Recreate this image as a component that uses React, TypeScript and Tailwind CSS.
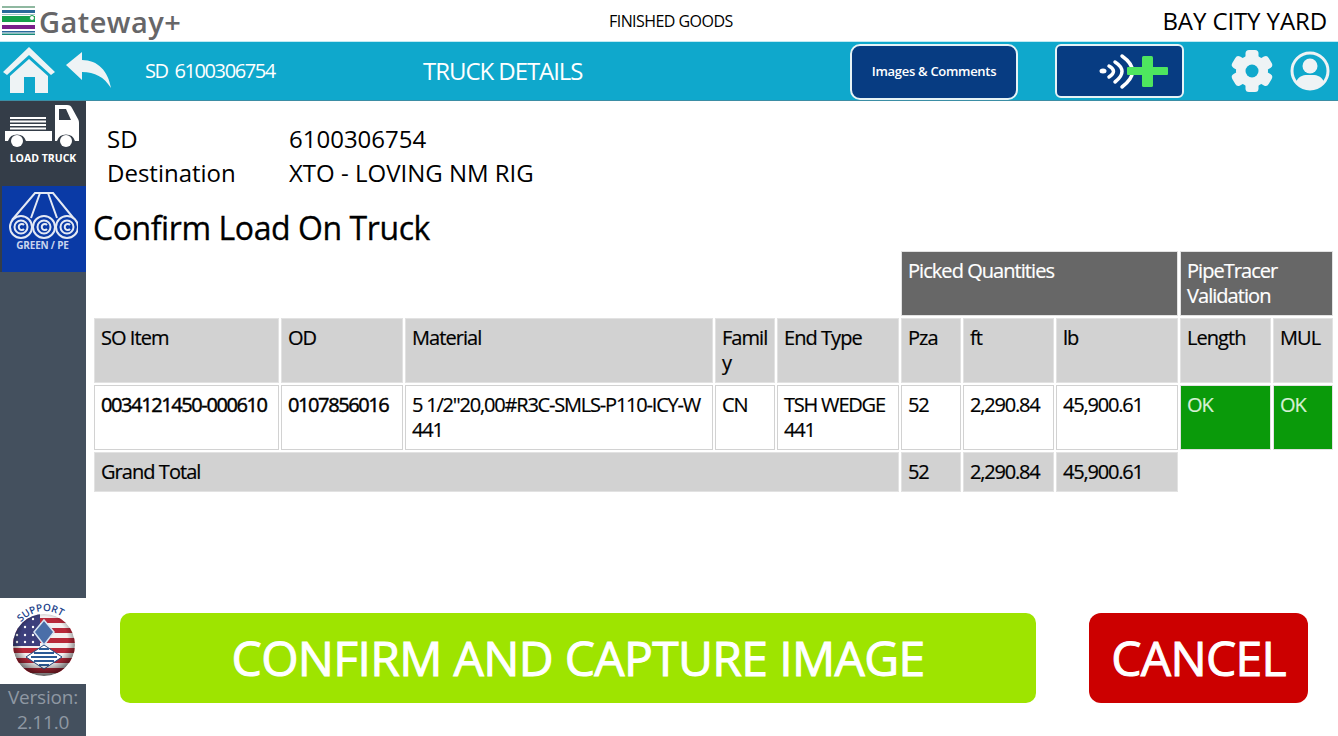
import React from "react";

const font = { fontFamily: '"Open Sans", sans-serif' };

function Logo() {
  return (
    <svg width="36" height="30" viewBox="0 0 36 30" className="shrink-0">
      <rect x="1" y="0" width="33" height="2" fill="#8fb8a0" />
      <rect x="1" y="4" width="33" height="3" fill="#2a6a9a" />
      <rect x="1" y="8" width="33" height="1" fill="#a8c8c8" />
      <rect x="1" y="10" width="33" height="6" fill="#14a04a" />
      <circle cx="31" cy="12" r="2.5" fill="#fff" stroke="#14a04a" />
      <rect x="1" y="19" width="33" height="4" fill="#7a1f8a" />
      <rect x="1" y="25" width="33" height="1.5" fill="#2a6a9a" />
      <rect x="1" y="27.5" width="33" height="1.5" fill="#1a8a7a" />
    </svg>
  );
}

function Home() {
  return (
    <svg width="54" height="48" viewBox="0 0 54 48" className="block">
      <path d="M27 1 L53 26 L49 29 L27 9 L5 29 L1 26 Z" fill="#eef3f5" />
      <path d="M27 13 L46 30 V47 H33 V31 H22 V47 H8 V30 Z" fill="#eef3f5" />
    </svg>
  );
}

function Back() {
  return (
    <svg width="48" height="38" viewBox="0 0 48 38" className="block">
      <path d="M1 14 L17 1 V9 C33 9 43 20 46 37 C39 26 30 21 17 21 V29 Z" fill="#eef3f5" />
    </svg>
  );
}

function Wifi() {
  return (
    <svg width="72" height="38" viewBox="0 0 72 38" className="block">
      <ellipse cx="5" cy="19" rx="3.5" ry="2.5" fill="#fff" />
      <path d="M11 14 Q20 19 11 25" fill="none" stroke="#fff" strokeWidth="3.5" strokeLinecap="round" />
      <path d="M17 10 Q31 19 17 30" fill="none" stroke="#fff" strokeWidth="3.5" strokeLinecap="round" />
      <path d="M24 4 Q45 19 24 35" fill="none" stroke="#fff" strokeWidth="3.5" strokeLinecap="round" />
      <rect x="29" y="15" width="41" height="8" rx="1" fill="#4ee65f" />
      <rect x="44" y="4" width="11" height="31" rx="1.5" fill="#4ee65f" />
    </svg>
  );
}

function Gear() {
  return (
    <svg width="44" height="44" viewBox="0 0 44 44" className="block">
      <g fill="#eef3f5">
        <circle cx="22" cy="22" r="16" />
        {[0, 60, 120, 180, 240, 300].map((a) => (
          <rect key={a} x="15.5" y="1" width="13" height="10" rx="3.5" transform={`rotate(${a} 22 22)`} />
        ))}
      </g>
      <circle cx="22" cy="22" r="6.5" fill="#0fa8cc" />
    </svg>
  );
}

function User() {
  return (
    <svg width="40" height="40" viewBox="0 0 40 40" className="block">
      <circle cx="20" cy="20" r="18" fill="none" stroke="#eef3f5" strokeWidth="3" />
      <circle cx="20" cy="15" r="7.5" fill="#eef3f5" />
      <path d="M6 31 C9 24 14 24 20 24 C26 24 31 24 34 31 C30 36 25 38 20 38 C15 38 10 36 6 31 Z" fill="#eef3f5" />
    </svg>
  );
}

function Truck() {
  return (
    <svg width="76" height="44" viewBox="0 0 76 44" className="block">
      <g fill="#fff">
        <rect x="5" y="12" width="36" height="2" />
        <rect x="5" y="15.5" width="36" height="2" />
        <rect x="5" y="19" width="36" height="2" />
        <rect x="5" y="22.5" width="36" height="2" />
        <path d="M0 26 H47 V36 H21 A9.5 9.5 0 0 0 3 36 H0 Z" />
        <path d="M50 0 H62 C65 0 66 1 67 3 L73 14 C74 16 74 17 74 19 V36 H70 A9.5 9.5 0 0 0 52 36 H50 Z M54 4 V15 H66 L61 4 Z" fillRule="evenodd" />
        <circle cx="12" cy="36" r="6" />
        <circle cx="61" cy="36" r="6" />
      </g>
    </svg>
  );
}

function Pipes() {
  return (
    <svg width="70" height="48" viewBox="0 0 70 48" fill="none" stroke="#e4e9f4" strokeWidth="2" className="block">
      <path d="M4 28 L27 1 H45 L67 28" />
      <path d="M23 26 L32 1 M49 26 L40 1" />
      {[13, 36, 59].map((x) => (
        <g key={x} fill="#0a3aa6">
          <circle cx={x} cy="35" r="11" />
          <circle cx={x} cy="35" r="6.5" />
          <path d={`M${x + 3} 37 a3 3 0 1 1 0 -4`} fill="none" />
        </g>
      ))}
    </svg>
  );
}

function Support() {
  return (
    <svg width="70" height="82" viewBox="0 0 70 82" className="block">
      <defs>
        <clipPath id="ball">
          <circle cx="36" cy="47" r="31" />
        </clipPath>
        <radialGradient id="shine" cx="50%" cy="42%" r="58%">
          <stop offset="65%" stopColor="#000" stopOpacity="0" />
          <stop offset="100%" stopColor="#000" stopOpacity="0.6" />
        </radialGradient>
      </defs>
      <path id="arc" d="M12 25 Q36 1 62 25" fill="none" />
      <text fontSize="10" fontWeight="600" fill="#1c3f8a" style={font}>
        <textPath href="#arc" startOffset="1">SUPPORT</textPath>
      </text>
      <g clipPath="url(#ball)">
        <rect x="0" y="14" width="72" height="66" fill="#f4f0f0" />
        {[20, 30, 40, 50, 60, 70].map((y) => (
          <rect key={y} x="0" y={y} width="72" height="5" fill="#b8293a" />
        ))}
        <rect x="2" y="14" width="30" height="34" fill="#3c3f7c" />
        {[21, 29, 37, 44].map((y) =>
          [9, 17, 25].map((x) => <circle key={`${x}${y}`} cx={x} cy={y} r="1.2" fill="#fff" />)
        )}
        <path d="M36 22 L46 34 L36 47 L26 34 Z" fill="#4a6ea8" stroke="#d8e4f2" strokeWidth="1.5" />
        <path d="M36 47 L54 59 L36 71 L18 59 Z" fill="#fff" stroke="#234a80" strokeWidth="1" />
        <path d="M31 51 H41 M26 55 H46 M23 59 H49 M26 63 H46 M31 67 H41" stroke="#2b5a95" strokeWidth="2" />
        <circle cx="36" cy="47" r="31" fill="url(#shine)" />
      </g>
    </svg>
  );
}

const head = "bg-[#d2d2d2] border border-[#e2e2e2] text-black px-[6px] pt-[6px] leading-[25px]";
const dark = "bg-[#676767] border border-[#e2e2e2] text-white px-[6px] pt-[6px] leading-[25px]";
const cell = "bg-white border border-[#d2d2d2] text-black px-[6px] pt-[6px] leading-[25px] whitespace-nowrap tracking-[-1.2px]";
const ok = "bg-[#0a9a0a] border border-[#e2e2e2] text-[#d6f0d6] px-[6px] pt-[6px] leading-[25px]";
const idCell = "bg-white border border-[#d2d2d2] text-black px-[6px] pt-[6px] leading-[25px] whitespace-nowrap tracking-[-1.4px] [-webkit-text-stroke:0.45px]";

export default function App() {
  return (
    <div style={font} className="w-[1338px] h-[736px] bg-white flex flex-col overflow-hidden">
      <header className="h-[42px] flex items-center justify-between relative bg-white border-b border-[#bfeaf3]">
        <div className="flex items-center gap-[2px] pl-[1px] h-full">
          <Logo />
          <span className="text-[29px] font-semibold text-[#666668] leading-none tracking-[0.45px] mt-[1px]">Gateway+</span>
        </div>
        <div className="absolute left-[609px] top-[11px] text-[16px] leading-[20px] text-black tracking-[-0.55px]">FINISHED GOODS</div>
        <div className="text-[24px] text-black pr-[11px] tracking-[-0.1px]">BAY CITY YARD</div>
      </header>

      <nav className="h-[59px] bg-[#0fa8cc] border-b border-b-[#3b8ea5] flex items-center text-white">
        <div className="pl-[2px] mt-[-2px]"><Home /></div>
        <div className="ml-[9px] mt-[-2px]"><Back /></div>
        <div className="ml-[32px] w-[278px] text-[20px] tracking-[-1.4px] [word-spacing:3px]">SD 6100306754</div>
        <div className="w-[427px] text-[24px] tracking-[-1.05px]">TRUCK DETAILS</div>
        <button className="w-[168px] h-[56px] mt-[1px] rounded-[10px] border-2 border-[#e6f3f6] bg-[#073c82] text-[13px] font-semibold text-white tracking-[-0.3px]">Images &amp; Comments</button>
        <button className="ml-[37px] w-[129px] h-[54px] rounded-[6px] border-2 border-[#e6f3f6] bg-[#073c82] flex items-center justify-start pl-[41px]"><Wifi /></button>
        <div className="ml-[46px]"><Gear /></div>
        <div className="ml-[16px] mr-[8px]"><User /></div>
      </nav>

      <div className="flex-1 flex min-h-0">
        <aside className="w-[86px] flex flex-col shrink-0">
          <div className="h-[85px] bg-[#343d48] flex flex-col items-center pt-[4px]">
            <Truck />
            <span className="text-[10.5px] font-bold text-white mt-[2px] leading-[14px]">LOAD TRUCK</span>
          </div>
          <div className="h-[86px] bg-[#343d48]">
            <div className="h-full ml-[2px] bg-[#0a3aa6] flex flex-col items-center pt-[6px]">
              <div className="ml-[-2px]"><Pipes /></div>
              <span className="text-[10px] font-bold text-[#c9d4ee] leading-[12px] tracking-[-0.2px] mr-[3px] mt-[-1px]">GREEN / PE</span>
            </div>
          </div>
          <div className="flex-1 bg-[#44505e]" />
          <div className="h-[86px] bg-white flex justify-center"><Support /></div>
          <div className="h-[52px] bg-[#44505e] text-[#8f98a3] text-[19px] leading-[25px] text-center pt-[1px] tracking-[-0.2px]">
            Version:<br />2.11.0
          </div>
        </aside>

        <main className="flex-1 flex flex-col min-w-0">
          <div className="grid grid-cols-[182px_1fr] pl-[21px] pt-[21px] text-[24px] leading-[34px] text-black">
            <div>SD</div>
            <div>6100306754</div>
            <div>Destination</div>
            <div>XTO - LOVING NM RIG</div>
          </div>
          <h1 className="pl-[7px] mt-[16px] text-[32px] leading-[44px] text-black tracking-[-0.42px] [-webkit-text-stroke:0.3px]">Confirm Load On Truck</h1>

          <div className="ml-[8px] mt-[1px] w-[1239px] grid grid-cols-[185px_122px_308px_60px_122px_60px_91px_122px_91px_60px] grid-rows-[65px_65px_65px_40px] gap-[2px] text-[20px] tracking-[-0.95px] [-webkit-text-stroke:0.2px]">
            <div className="col-span-5" />
            <div className={`${dark} col-span-3`}>Picked Quantities</div>
            <div className={`${dark} col-span-2`}>PipeTracer<br />Validation</div>

            <div className={head}>SO Item</div>
            <div className={head}>OD</div>
            <div className={head}>Material</div>
            <div className={head}>Famil<br />y</div>
            <div className={head}>End Type</div>
            <div className={head}>Pza</div>
            <div className={head}>ft</div>
            <div className={head}>lb</div>
            <div className={head}>Length</div>
            <div className={head}>MUL</div>

            <div className={idCell}>0034121450-000610</div>
            <div className={idCell}>0107856016</div>
            <div className={cell}>5 1/2"20,00#R3C-SMLS-P110-ICY-W<br />441</div>
            <div className={cell}>CN</div>
            <div className={cell}>TSH WEDGE<br />441</div>
            <div className={cell}>52</div>
            <div className={cell}>2,290.84</div>
            <div className={cell}>45,900.61</div>
            <div className={ok}>OK</div>
            <div className={ok}>OK</div>

            <div className={`${head} col-span-5`}>Grand Total</div>
            <div className={`${head} tracking-[-1.2px]`}>52</div>
            <div className={`${head} tracking-[-1.2px]`}>2,290.84</div>
            <div className={`${head} tracking-[-1.2px]`}>45,900.61</div>
          </div>

          <div className="mt-auto flex pb-[33px] pl-[34px]">
            <button className="w-[916px] h-[90px] rounded-[10px] bg-[#9ee400] text-white text-[48px] tracking-[-0.65px] [-webkit-text-stroke:1px]">CONFIRM AND CAPTURE IMAGE</button>
            <button className="ml-[53px] w-[219px] h-[90px] rounded-[12px] bg-[#cc0000] text-white text-[48px] tracking-[-0.7px] [-webkit-text-stroke:1px]">CANCEL</button>
          </div>
        </main>
      </div>
    </div>
  );
}
